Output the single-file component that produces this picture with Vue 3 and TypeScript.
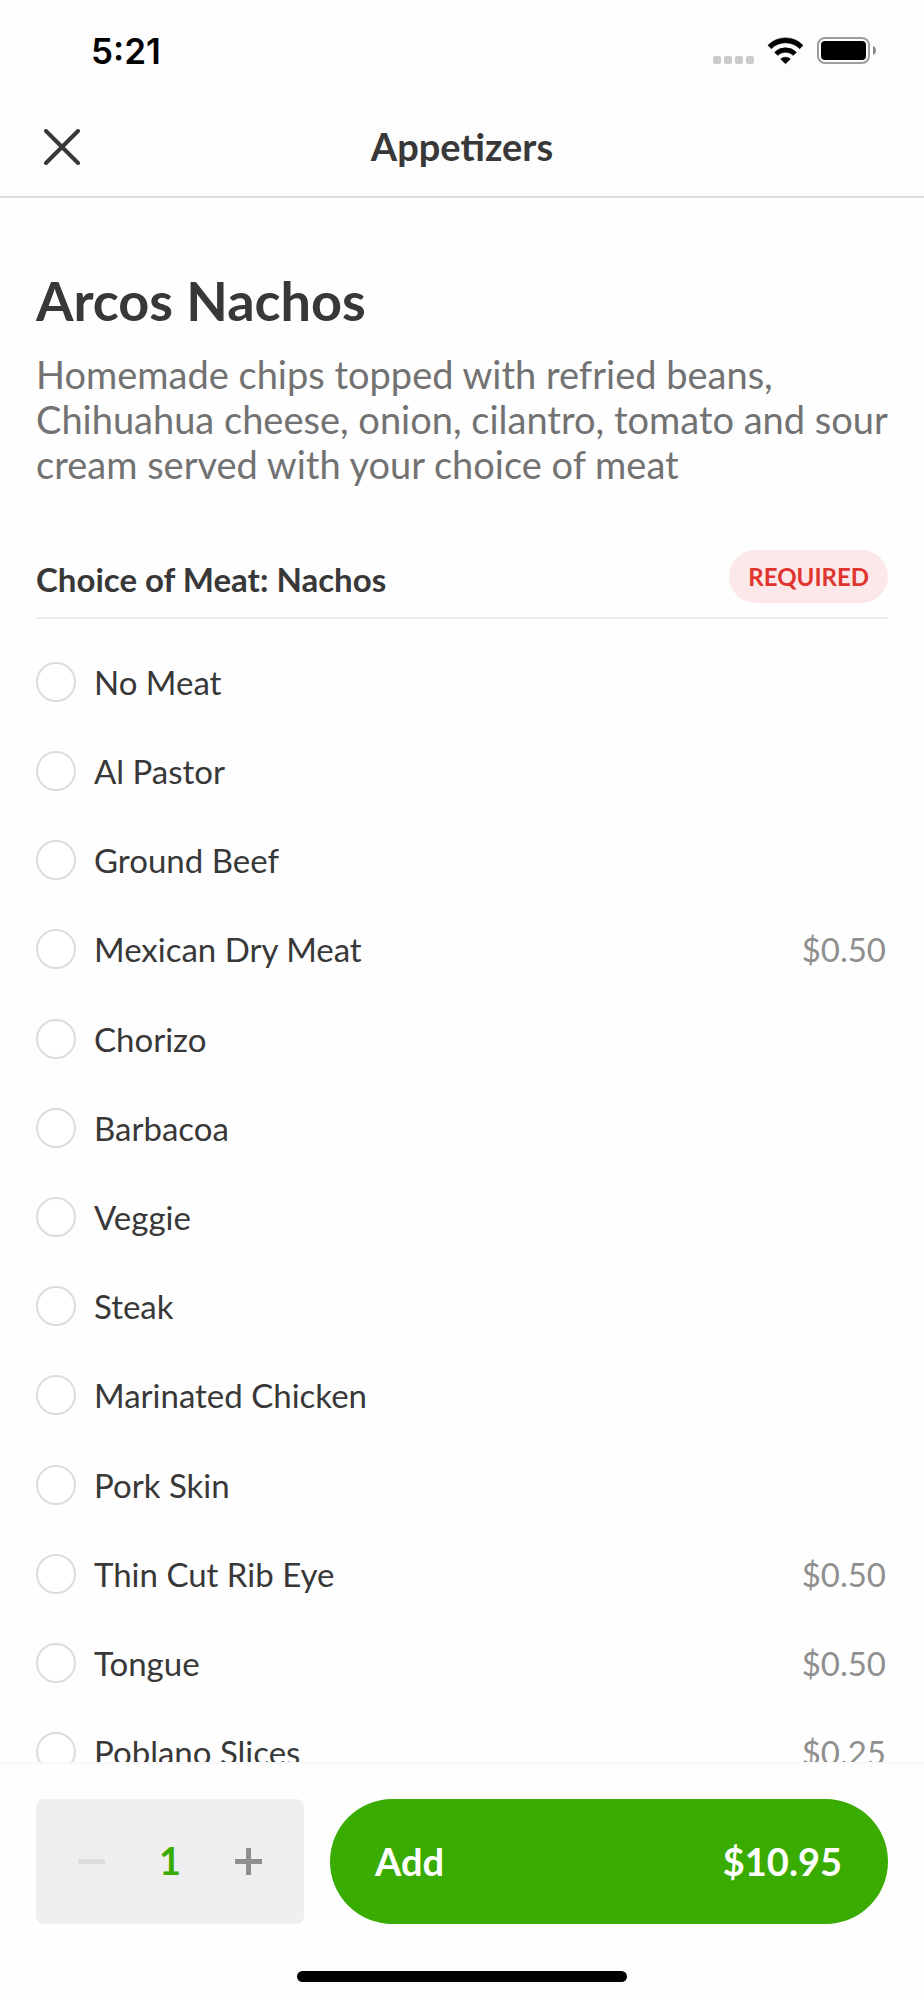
<script setup lang="ts">
import { computed, ref } from 'vue'

interface Option {
  name: string
  price?: number
}

const options: Option[] = [
  { name: 'No Meat' },
  { name: 'Al Pastor' },
  { name: 'Ground Beef' },
  { name: 'Mexican Dry Meat', price: 0.5 },
  { name: 'Chorizo' },
  { name: 'Barbacoa' },
  { name: 'Veggie' },
  { name: 'Steak' },
  { name: 'Marinated Chicken' },
  { name: 'Pork Skin' },
  { name: 'Thin Cut Rib Eye', price: 0.5 },
  { name: 'Tongue', price: 0.5 },
  { name: 'Poblano Slices', price: 0.25 },
]

const basePrice = 10.95
const quantity = ref(1)
const selected = ref('')

const money = (value: number): string => `$${value.toFixed(2)}`

const total = computed(() => {
  const extra = options.find((o) => o.name === selected.value)?.price ?? 0
  return money((basePrice + extra) * quantity.value)
})
</script>

<template>
  <div class="screen">
    <header class="top">
      <div class="status">
        <span class="time">5:21</span>
        <div class="indicators">
          <svg class="dots" width="42" height="28" viewBox="0 0 42 28" fill="#cbcbcb" aria-hidden="true">
            <rect x="0" y="19" width="8" height="8" rx="2" />
            <rect x="11" y="19" width="8" height="8" rx="2" />
            <rect x="22" y="19" width="8" height="8" rx="2" />
            <rect x="33" y="19" width="8" height="8" rx="2" />
          </svg>
          <svg class="wifi" width="37" height="28" viewBox="320 108 111 84" aria-hidden="true">
            <g stroke="#000" stroke-width="2" stroke-linejoin="round">
              <path d="M323 133A73 73 0 0 1 428 133L418 143A60 60 0 0 0 333 143Z" />
              <path d="M343 154A46 46 0 0 1 408 154L399 163A34 34 0 0 0 352 163Z" />
              <path d="M361 174A22 22 0 0 1 390 174L375.500 188Z" />
            </g>
          </svg>
          <svg width="60" height="28" viewBox="0 0 60 28" aria-hidden="true">
            <rect x="1" y="1" width="51" height="25" rx="7" fill="none" stroke="#9d9d9d" stroke-width="2" />
            <rect x="4" y="4" width="45" height="19" rx="4" />
            <path d="M56 9C60 10.500 60 16.500 56 18Z" fill="#8a8a8a" />
          </svg>
        </div>
      </div>
      <nav class="nav">
        <button class="close" type="button" aria-label="Close">
          <svg width="36" height="36" viewBox="0 0 36 36" fill="none" stroke="#383838" stroke-width="4" stroke-linecap="round">
            <path d="M2 2L34 34M34 2L2 34" />
          </svg>
        </button>
        <span class="category">Appetizers</span>
      </nav>
    </header>

    <main class="content">
      <h1 class="title">Arcos Nachos</h1>
      <p class="description">
        Homemade chips topped with refried beans, Chihuahua cheese, onion, cilantro, tomato and sour cream served with your choice of meat
      </p>

      <section aria-labelledby="group-title">
        <div class="group-head">
          <h2 id="group-title" class="group-title">Choice of Meat: Nachos</h2>
          <span class="badge">REQUIRED</span>
        </div>
        <div class="options" role="radiogroup" aria-labelledby="group-title">
          <label v-for="option in options" :key="option.name" class="option">
            <input v-model="selected" class="radio" type="radio" name="meat" :value="option.name" />
            <span class="name">{{ option.name }}</span>
            <span v-if="option.price" class="price">{{ money(option.price) }}</span>
          </label>
        </div>
      </section>
    </main>

    <footer class="bottom">
      <div class="actions">
        <div class="stepper">
          <button class="step" type="button" aria-label="Decrease quantity" :disabled="quantity === 1" @click="quantity--">
            <svg width="27" height="27" viewBox="0 0 27 27" fill="currentColor">
              <rect y="11" width="27" height="5" />
            </svg>
          </button>
          <output class="count">{{ quantity }}</output>
          <button class="step" type="button" aria-label="Increase quantity" @click="quantity++">
            <svg width="27" height="27" viewBox="0 0 27 27" fill="currentColor">
              <path d="M11 0h5v11h11v5H16v11h-5V16H0v-5h11z" />
            </svg>
          </button>
        </div>
        <button class="add" type="button">
          <span>Add</span>
          <span>{{ total }}</span>
        </button>
      </div>
      <div class="home"></div>
    </footer>
  </div>
</template>

<style>
body {
  margin: 0;
  background: #fefefe;
}
</style>

<style scoped>
.screen {
  display: flex;
  flex-direction: column;
  height: 100vh;
  font-family: Lato, "Liberation Sans", sans-serif;
  color: #383838;
  background: #fefefe;
}

button {
  padding: 0;
  border: 0;
  background: none;
  font: inherit;
  color: inherit;
  cursor: pointer;
}

svg {
  display: block;
}

.top {
  flex: none;
  border-bottom: 2px solid #dedede;
  background: #fdfdfd;
}

.status {
  box-sizing: border-box;
  display: flex;
  align-items: center;
  justify-content: space-between;
  height: 98px;
  padding: 3px 47px 0 91px;
}

.time {
  font: 600 35px/40px Inter, sans-serif;
  color: #000;
}

.indicators {
  display: flex;
  align-items: center;
}

.wifi {
  margin: 0 13px 0 12px;
}

.nav {
  display: grid;
  grid-template-columns: 1fr auto 1fr;
  align-items: center;
  height: 98px;
  padding: 0 36px;
}

.close {
  justify-self: start;
  padding: 8px;
}

.category {
  padding-bottom: 2px;
  font-size: 38px;
  font-weight: 700;
  line-height: 46px;
}

.content {
  flex: 1;
  min-height: 0;
  padding: 71px 36px 0;
  overflow-y: auto;
  scrollbar-width: none;
}

.title {
  margin: 0;
  font-size: 54px;
  font-weight: 700;
  line-height: 64px;
}

.description {
  margin: 19px 0 0;
  font-size: 38px;
  line-height: 45px;
  color: #727272;
}

.group-head {
  display: flex;
  align-items: flex-end;
  justify-content: space-between;
  margin-top: 63px;
  padding-bottom: 14px;
  border-bottom: 2px solid #efefef;
}

.group-title {
  margin: 0;
  font-size: 33px;
  font-weight: 700;
  line-height: 48px;
}

.badge {
  padding: 0 19px;
  border-radius: 27px;
  font-size: 24px;
  font-weight: 700;
  line-height: 53px;
  color: #e0342e;
  background: #fde8e9;
}

.options {
  display: grid;
  grid-auto-rows: 1fr;
  min-height: 1160px;
  margin-top: 18px;
}

.option {
  display: flex;
  align-items: center;
  gap: 18px;
  font-size: 33px;
  line-height: 40px;
  cursor: pointer;
}

.radio {
  appearance: none;
  flex: none;
  box-sizing: border-box;
  width: 40px;
  height: 40px;
  margin: 0;
  border: 2px solid #dddddd;
  border-radius: 50%;
  background: #fff;
}

.radio:checked {
  border: 12px solid #3aab00;
}

.name {
  flex: 1;
}

.price {
  padding-right: 2px;
  color: #8f8f8f;
}

.bottom {
  flex: none;
  padding: 35px 36px 18px;
  border-top: 2px solid #f8f8f8;
}

.actions {
  display: flex;
  gap: 26px;
  height: 125px;
}

.stepper {
  flex: none;
  box-sizing: border-box;
  display: flex;
  align-items: center;
  justify-content: space-between;
  width: 268px;
  padding: 0 30px;
  border-radius: 8px;
  background: #efefef;
}

.step {
  padding: 12px;
  color: #8f8f8f;
}

.step:disabled {
  color: #dddddd;
  cursor: default;
}

.count {
  padding-bottom: 4px;
  font-size: 38px;
  font-weight: 700;
  line-height: 46px;
  color: #3aab00;
}

.add {
  flex: 1;
  display: flex;
  align-items: center;
  justify-content: space-between;
  padding: 0 46px 2px 45px;
  border-radius: 63px;
  font-size: 38px;
  font-weight: 700;
  line-height: 46px;
  color: #fff;
  background: #3aab00;
}

.home {
  width: 330px;
  height: 11px;
  margin: 47px auto 0;
  border-radius: 6px;
  background: #000;
}
</style>
